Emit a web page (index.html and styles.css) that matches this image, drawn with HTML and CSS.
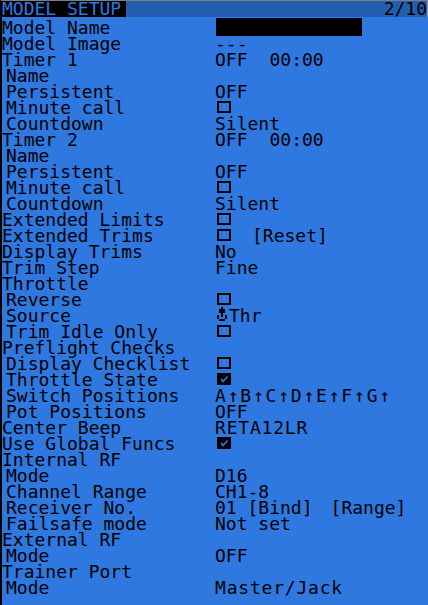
FILE: index.html
```html
<!DOCTYPE html>
<html>
<head>
<meta charset="utf-8">
<link rel="stylesheet" href="styles.css">
</head>
<body>
<div class="screen">
  <div class="header">
    <div class="title">MODEL SETUP</div>
    <div class="page">2/10</div>
  </div>
  <div class="list">
    <div class="row"><span class="lbl">Model Name</span><span class="val"><span class="namebox"></span></span></div>
    <div class="row"><span class="lbl">Model Image</span><span class="val">---</span></div>
    <div class="row"><span class="lbl">Timer 1</span><span class="val">OFF<span class="time">00:00</span></span></div>
    <div class="row sub"><span class="lbl">Name</span><span class="val"></span></div>
    <div class="row sub"><span class="lbl">Persistent</span><span class="val">OFF</span></div>
    <div class="row sub"><span class="lbl">Minute call</span><span class="val"><span class="cb"></span></span></div>
    <div class="row sub"><span class="lbl">Countdown</span><span class="val">Silent</span></div>
    <div class="row"><span class="lbl">Timer 2</span><span class="val">OFF<span class="time">00:00</span></span></div>
    <div class="row sub"><span class="lbl">Name</span><span class="val"></span></div>
    <div class="row sub"><span class="lbl">Persistent</span><span class="val">OFF</span></div>
    <div class="row sub"><span class="lbl">Minute call</span><span class="val"><span class="cb"></span></span></div>
    <div class="row sub"><span class="lbl">Countdown</span><span class="val">Silent</span></div>
    <div class="row"><span class="lbl">Extended Limits</span><span class="val"><span class="cb"></span></span></div>
    <div class="row"><span class="lbl">Extended Trims</span><span class="val"><span class="cb"></span><span class="reset">[Reset]</span></span></div>
    <div class="row"><span class="lbl">Display Trims</span><span class="val">No</span></div>
    <div class="row"><span class="lbl">Trim Step</span><span class="val">Fine</span></div>
    <div class="row"><span class="lbl">Throttle</span><span class="val"></span></div>
    <div class="row sub"><span class="lbl">Reverse</span><span class="val"><span class="cb"></span></span></div>
    <div class="row sub"><span class="lbl">Source</span><span class="val"><svg class="thr" width="10" height="14" viewBox="0 0 10 14"><rect x="4" y="0" width="2" height="2"/><rect x="2" y="2" width="6" height="4"/><rect x="4" y="6" width="2" height="4"/><rect x="0" y="8" width="2" height="4"/><rect x="8" y="8" width="2" height="4"/><rect x="2" y="12" width="6" height="2"/></svg>Thr</span></div>
    <div class="row sub"><span class="lbl">Trim Idle Only</span><span class="val"><span class="cb"></span></span></div>
    <div class="row"><span class="lbl">Preflight Checks</span><span class="val"></span></div>
    <div class="row sub"><span class="lbl">Display Checklist</span><span class="val"><span class="cb"></span></span></div>
    <div class="row sub"><span class="lbl">Throttle State</span><span class="val"><svg class="cbon" width="14" height="12" viewBox="0 0 14 12"><rect width="14" height="12" fill="#000"/><polyline points="4,6 6,8.5 10.5,3.5" fill="none" stroke="#2e78e0" stroke-width="1.6"/></svg></span></div>
    <div class="row sub"><span class="lbl">Switch Positions</span><span class="val arrows">A↑B↑C↑D↑E↑F↑G↑</span></div>
    <div class="row sub"><span class="lbl">Pot Positions</span><span class="val">OFF</span></div>
    <div class="row"><span class="lbl">Center Beep</span><span class="val wide">RETA12LR</span></div>
    <div class="row"><span class="lbl">Use Global Funcs</span><span class="val"><svg class="cbon" width="14" height="12" viewBox="0 0 14 12"><rect width="14" height="12" fill="#000"/><polyline points="4,6 6,8.5 10.5,3.5" fill="none" stroke="#2e78e0" stroke-width="1.6"/></svg></span></div>
    <div class="row"><span class="lbl">Internal RF</span><span class="val"></span></div>
    <div class="row sub"><span class="lbl">Mode</span><span class="val">D16</span></div>
    <div class="row sub"><span class="lbl">Channel Range</span><span class="val">CH1-8</span></div>
    <div class="row sub"><span class="lbl">Receiver No.</span><span class="val">01 [Bind]<span class="range">[Range]</span></span></div>
    <div class="row sub"><span class="lbl">Failsafe mode</span><span class="val">Not set</span></div>
    <div class="row"><span class="lbl">External RF</span><span class="val"></span></div>
    <div class="row sub"><span class="lbl">Mode</span><span class="val">OFF</span></div>
    <div class="row"><span class="lbl">Trainer Port</span><span class="val"></span></div>
    <div class="row sub"><span class="lbl">Mode</span><span class="val wide">Master/Jack</span></div>
  </div>
</div>
</body>
</html>
```
FILE: styles.css
```css
html, body {
  margin: 0;
  padding: 0;
  background: #2e78e0;
}

.screen {
  width: 428px;
  height: 605px;
  box-sizing: border-box;
  background: #2e78e0;
  border-top: 1px solid #7d7d7d;
  border-left: 2px solid #000;
  overflow: hidden;
  font-family: "DejaVu Sans Mono", monospace;
  font-size: 18px;
  color: #000;
}

.header {
  display: flex;
  height: 16px;
  line-height: 16px;
  background: #235fae;
  border-right: 1px solid #9a9a9a;
}

.title {
  width: 124px;
  background: #000;
  color: #2e78e0;
  white-space: nowrap;
}

.page {
  margin-left: auto;
  white-space: nowrap;
}

.list {
  padding-top: 3px;
}

.row {
  display: grid;
  grid-template-columns: 213px 1fr;
  height: 16px;
  line-height: 16px;
  white-space: nowrap;
}

.sub .lbl {
  padding-left: 4px;
}

.val {
  display: flex;
  align-items: flex-start;
}

.namebox {
  display: block;
  width: 146px;
  height: 18px;
  margin-top: -2px;
  margin-left: 1px;
  background: #000;
}

.time {
  margin-left: 22px;
}

.cb {
  display: inline-block;
  box-sizing: border-box;
  width: 14px;
  height: 12px;
  margin-top: 1px;
  margin-left: 2px;
  border: 2px solid #000;
}

.cbon {
  display: block;
  margin-top: 1px;
  margin-left: 2px;
}

.reset {
  margin-left: 21px;
}

.range {
  margin-left: 18px;
}

.thr {
  display: block;
  margin-left: 2px;
  margin-right: 2px;
  margin-top: -1px;
  fill: #000;
}

.arrows {
  letter-spacing: 1.8px;
}

.wide {
  letter-spacing: 0.8px;
}
```
